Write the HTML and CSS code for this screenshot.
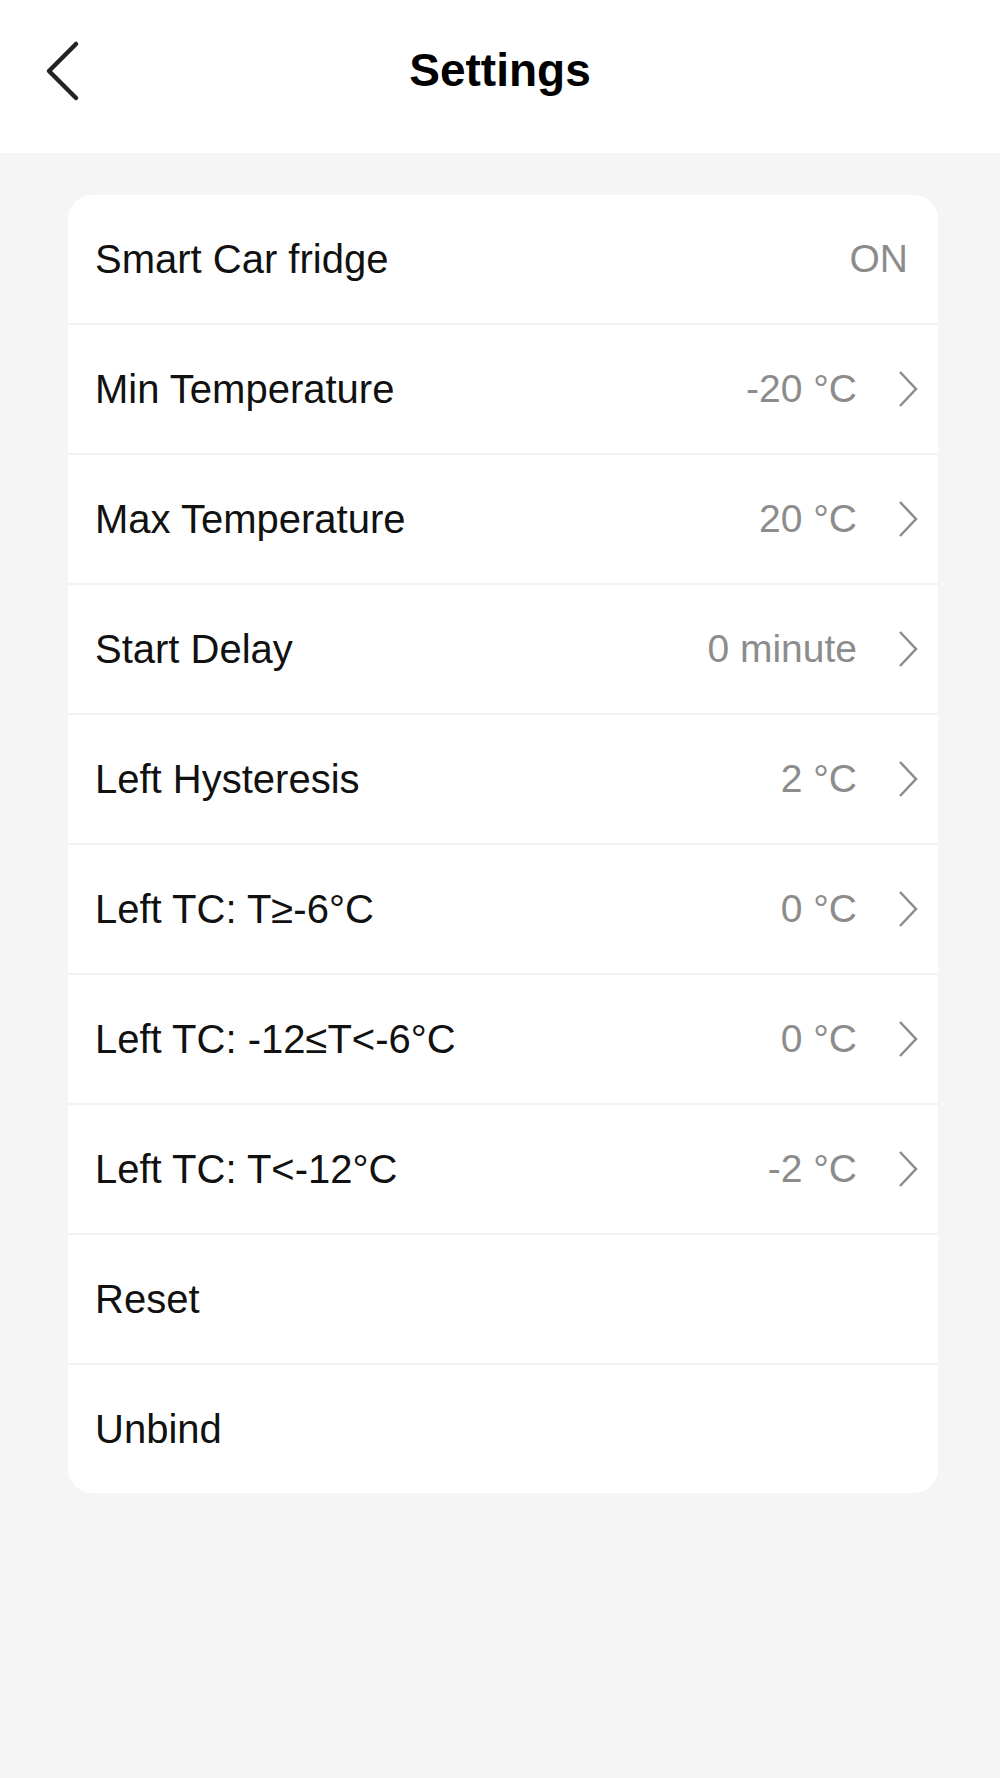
FILE: index.html
```html
<!DOCTYPE html>
<html>
<head>
<meta charset="utf-8">
<link rel="stylesheet" href="styles.css">
</head>
<body>
<header class="topbar">
  <svg class="back" width="40" height="62" viewBox="0 0 40 62"><polyline points="34,4 7,31 34,58" fill="none" stroke="#222" stroke-width="4.5" stroke-linecap="round" stroke-linejoin="round"/></svg>
  <h1 class="title">Settings</h1>
</header>
<main class="content">
  <section class="card">
    <div class="row"><span class="label">Smart Car fridge</span><span class="value">ON</span></div>
    <div class="row"><span class="label">Min Temperature</span><span class="value">-20 °C</span><svg class="chev" width="22" height="38" viewBox="0 0 22 38"><polyline points="3,2 19,19 3,36" fill="none" stroke="#8c8c8c" stroke-width="2.5"/></svg></div>
    <div class="row"><span class="label">Max Temperature</span><span class="value">20 °C</span><svg class="chev" width="22" height="38" viewBox="0 0 22 38"><polyline points="3,2 19,19 3,36" fill="none" stroke="#8c8c8c" stroke-width="2.5"/></svg></div>
    <div class="row"><span class="label">Start Delay</span><span class="value">0 minute</span><svg class="chev" width="22" height="38" viewBox="0 0 22 38"><polyline points="3,2 19,19 3,36" fill="none" stroke="#8c8c8c" stroke-width="2.5"/></svg></div>
    <div class="row"><span class="label">Left Hysteresis</span><span class="value">2 °C</span><svg class="chev" width="22" height="38" viewBox="0 0 22 38"><polyline points="3,2 19,19 3,36" fill="none" stroke="#8c8c8c" stroke-width="2.5"/></svg></div>
    <div class="row"><span class="label">Left TC: T≥-6°C</span><span class="value">0 °C</span><svg class="chev" width="22" height="38" viewBox="0 0 22 38"><polyline points="3,2 19,19 3,36" fill="none" stroke="#8c8c8c" stroke-width="2.5"/></svg></div>
    <div class="row"><span class="label">Left TC: -12≤T&lt;-6°C</span><span class="value">0 °C</span><svg class="chev" width="22" height="38" viewBox="0 0 22 38"><polyline points="3,2 19,19 3,36" fill="none" stroke="#8c8c8c" stroke-width="2.5"/></svg></div>
    <div class="row"><span class="label">Left TC: T&lt;-12°C</span><span class="value">-2 °C</span><svg class="chev" width="22" height="38" viewBox="0 0 22 38"><polyline points="3,2 19,19 3,36" fill="none" stroke="#8c8c8c" stroke-width="2.5"/></svg></div>
    <div class="row"><span class="label">Reset</span></div>
    <div class="row"><span class="label">Unbind</span></div>
  </section>
</main>
</body>
</html>
```
FILE: styles.css
```css
html, body {
  margin: 0;
  padding: 0;
}
body {
  background: #f5f5f5;
  font-family: "Liberation Sans", Arial, sans-serif;
  color: #111;
  min-height: 1778px;
}
.topbar {
  position: relative;
  height: 153px;
  background: #fff;
  display: flex;
  align-items: flex-start;
  justify-content: center;
}
.back {
  position: absolute;
  left: 42px;
  top: 40px;
}
.title {
  margin: 0;
  margin-top: 43px;
  font-size: 46px;
  font-weight: bold;
  line-height: 54px;
  color: #000;
}
.content {
  padding: 42px 62px 0 68px;
}
.card {
  background: #fff;
  border-radius: 24px;
  overflow: hidden;
}
.row {
  height: 128px;
  display: flex;
  align-items: center;
  padding: 0 19px 0 27px;
  border-bottom: 2px solid #f2f2f2;
}
.row:last-child {
  border-bottom: none;
}
.label {
  flex: 1;
  font-size: 40px;
  color: #111;
}
.value {
  font-size: 39px;
  color: #8c8c8c;
  margin-right: 11px;
}
.chev {
  margin-left: 29px;
}
```
